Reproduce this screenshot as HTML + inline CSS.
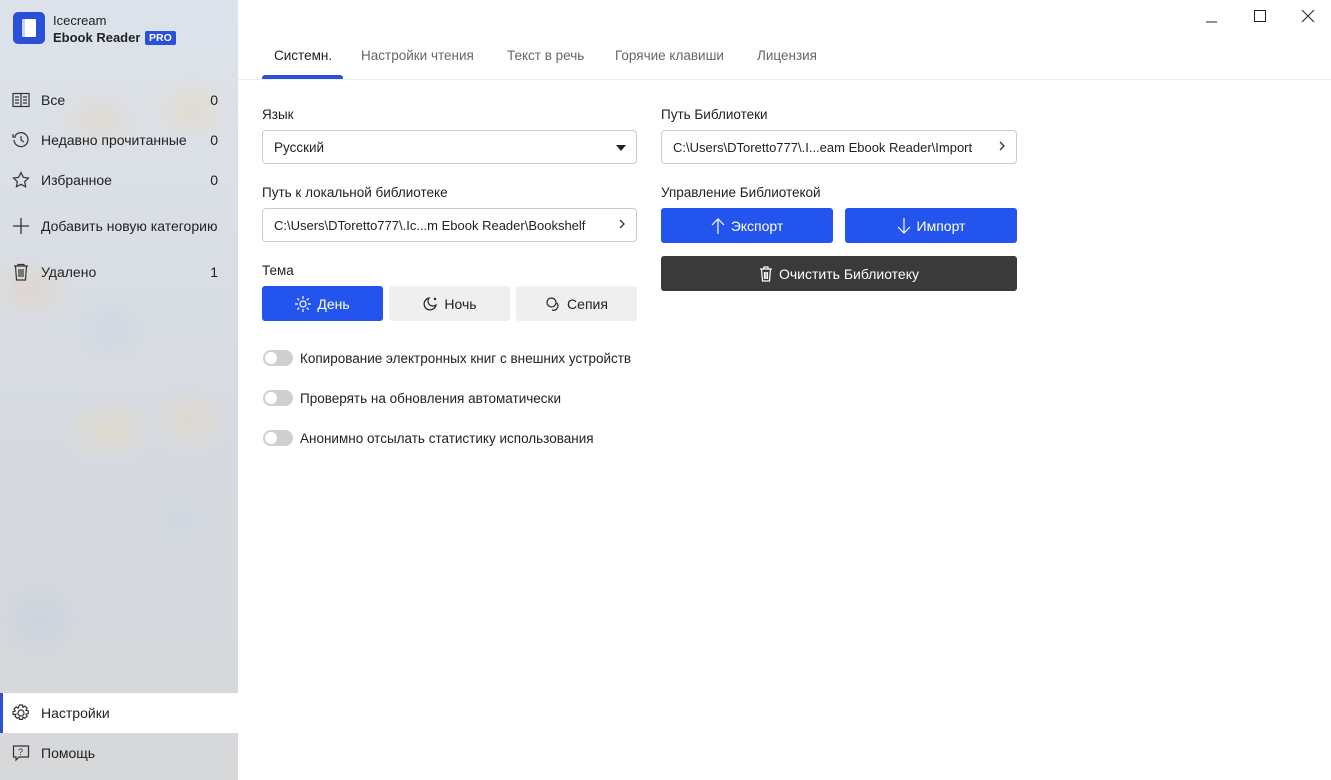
<!DOCTYPE html>
<html><head><meta charset="utf-8"><style>
*{box-sizing:border-box;margin:0;padding:0}
body{width:1331px;height:780px;overflow:hidden;background:#fff;font-family:"Liberation Sans","DejaVu Sans",sans-serif;font-size:13.5px;color:#222;position:relative}
.side{position:absolute;left:0;top:0;width:238px;height:780px;background:
radial-gradient(ellipse 45px 35px at 100px 120px,#e0dad2,transparent),
radial-gradient(ellipse 45px 35px at 190px 110px,#e2dbd0,transparent),
radial-gradient(ellipse 40px 35px at 110px 330px,#d0d8e2,transparent),
radial-gradient(ellipse 45px 35px at 30px 290px,#dfd6d0,transparent),
radial-gradient(ellipse 45px 35px at 110px 430px,#dfdacd,transparent),
radial-gradient(ellipse 40px 35px at 190px 420px,#dfd8d0,transparent),
radial-gradient(ellipse 45px 45px at 40px 620px,#ccd4de,transparent),
radial-gradient(ellipse 45px 45px at 180px 520px,#d2d8e0,transparent),
linear-gradient(#dde3ea,#d6dae0 60%,#d6d8da);}
.logo{position:absolute;left:13px;top:12px;width:32px;height:32px;border-radius:5px;background:#2950d6}
.logo i{position:absolute;left:9px;top:7px;width:14px;height:18px;background:#fff;border-radius:1px;border-left:3px solid #c9d4f5}
.t1{position:absolute;left:53px;top:13px;font-size:13px}
.t2{position:absolute;left:53px;top:30px;font-size:13px;font-weight:bold}
.pro{position:absolute;left:145px;top:31px;background:#2950d6;color:#fff;font-size:10.5px;font-weight:bold;padding:1px 4px;border-radius:2px}
.it{position:absolute;left:0;width:238px;height:40px;display:flex;align-items:center;font-size:14px}
.it svg{position:absolute;left:12px}
.it span.l{position:absolute;left:41px}
.it span.c{position:absolute;right:20px}
.sel{background:#fff;border-left:3px solid #2950d6}
.tabs{position:absolute;left:238px;top:0;right:0;height:80px;border-bottom:1px solid #eee}
.tab{position:absolute;top:48px;font-size:13.5px;color:#666}
.ul{position:absolute;left:262px;top:75px;width:81px;height:4px;background:#2950d6;border-radius:3px 3px 0 0}
.lab{position:absolute;font-size:13.5px;color:#222}
.box{position:absolute;height:34px;border:1px solid #ccc;border-radius:4px;display:flex;align-items:center;padding-left:11px;font-size:13.5px;color:#222}
.box .ar{position:absolute;right:10px;top:8px}
.btn{position:absolute;height:35px;border-radius:3px;display:flex;align-items:center;justify-content:center;font-size:14px;gap:6px}
.blue{background:#2454ee;color:#fff}
.grey{background:#efefef;color:#222}
.dark{background:#3a3a3a;color:#fff}
.tg{position:absolute;left:263px;width:30px;height:16px;border-radius:8px;background:#cfcfcf}
.tg::after{content:"";position:absolute;left:2px;top:2px;width:12px;height:12px;border-radius:50%;background:#fff}
.tl{position:absolute;left:300px;font-size:13.5px}
</style></head><body>
<div class="side">
<div class="logo"><i></i></div>
<div class="t1">Icecream</div><div class="t2">Ebook Reader</div><div class="pro">PRO</div>
<div class="it" style="top:80px"><svg width="18" height="16" viewBox="0 0 18 16" fill="none" stroke="#333" stroke-width="1.2"><rect x="1" y="1.5" width="16" height="13"/><line x1="9" y1="1.5" x2="9" y2="14.5"/><path d="M3 5h4M3 8h4M3 11h4M11 5h4M11 8h4M11 11h4"/></svg><span class="l">Все</span><span class="c">0</span></div>
<div class="it" style="top:120px"><svg width="18" height="18" viewBox="0 0 18 18" fill="none" stroke="#333" stroke-width="1.2"><path d="M3 5A7 7 0 1 1 2 9"/><path d="M1 3v3h3"/><path d="M9 5v4l3 2"/></svg><span class="l">Недавно прочитанные</span><span class="c">0</span></div>
<div class="it" style="top:160px"><svg width="18" height="18" viewBox="0 0 18 18" fill="none" stroke="#333" stroke-width="1.2"><path d="M9 1.5l2.3 4.8 5.2.7-3.8 3.6.9 5.2L9 13.3l-4.6 2.5.9-5.2L1.5 7l5.2-.7z"/></svg><span class="l">Избранное</span><span class="c">0</span></div>
<div class="it" style="top:206px"><svg width="18" height="18" viewBox="0 0 18 18" stroke="#333" stroke-width="1.3"><path d="M9 1v16M1 9h16"/></svg><span class="l">Добавить новую категорию</span></div>
<div class="it" style="top:252px"><svg width="18" height="18" viewBox="0 0 18 18" fill="none" stroke="#333" stroke-width="1.2"><path d="M2 3h14M6 3V1.5h6V3M3.5 3l1 14h9l1-14M7 6v8M9 6v8M11 6v8"/></svg><span class="l">Удалено</span><span class="c">1</span></div>
<div class="it sel" style="top:693px"><svg width="18" height="18" viewBox="0 0 18 18" fill="none" stroke="#333" stroke-width="1.2" style="left:9px"><circle cx="9" cy="9" r="3"/><path d="M7.5 1h3l.5 2.3 2-1.2 2.1 2.1-1.2 2 2.3.5v3l-2.3.5 1.2 2-2.1 2.1-2-1.2-.5 2.3h-3l-.5-2.3-2 1.2-2.1-2.1 1.2-2L1 10.5v-3l2.3-.5-1.2-2 2.1-2.1 2 1.2z"/></svg><span class="l" style="left:38px">Настройки</span></div>
<div class="it" style="top:733px"><svg width="18" height="18" viewBox="0 0 18 18" fill="none" stroke="#333" stroke-width="1.2"><path d="M1.5 2h15v11H7l-3 3v-3H1.5z"/><text x="6" y="11" font-size="9" fill="#333" stroke="none" font-family="Liberation Sans">?</text></svg><span class="l">Помощь</span></div>
</div>
<svg style="position:absolute;left:1206px;top:10px" width="110" height="14" fill="none" stroke="#222" stroke-width="1"><path d="M0 12h11"/><rect x="48.5" y="0.5" width="11" height="11"/><path d="M96 0l12 12M108 0L96 12"/></svg>
<div class="tabs"></div>
<div class="tab" style="left:274px;color:#222">Системн.</div>
<div class="tab" style="left:361px">Настройки чтения</div>
<div class="tab" style="left:507px">Текст в речь</div>
<div class="tab" style="left:615px">Горячие клавиши</div>
<div class="tab" style="left:757px">Лицензия</div>
<div class="ul"></div>

<div class="lab" style="left:262px;top:107px">Язык</div>
<div class="box" style="left:262px;top:130px;width:375px">Русский<svg class="ar" style="top:14px;right:10px" width="10" height="6"><path d="M0 0h10L5 6z" fill="#222"/></svg></div>
<div class="lab" style="left:262px;top:185px">Путь к локальной библиотеке</div>
<div class="box" style="left:262px;top:208px;width:375px;font-size:13px">C:\Users\DToretto777\.Ic...m Ebook Reader\Bookshelf<svg class="ar" width="8" height="14" fill="none" stroke="#333" stroke-width="1.3"><path d="M2 3l4 4-4 4"/></svg></div>
<div class="lab" style="left:262px;top:263px">Тема</div>
<div class="btn blue" style="left:262px;top:286px;width:121px"><svg width="16" height="16" fill="none" stroke="#fff" stroke-width="1.2"><circle cx="8" cy="8" r="3"/><path d="M8 0v3M8 13v3M0 8h3M13 8h3M2.3 2.3l2 2M11.7 11.7l2 2M2.3 13.7l2-2M11.7 4.3l2-2"/></svg>День</div>
<div class="btn grey" style="left:389px;top:286px;width:121px"><svg width="16" height="16" fill="none" stroke="#222" stroke-width="1.2"><path d="M7 2a6 6 0 1 0 7 7A5 5 0 0 1 7 2z"/><circle cx="13" cy="3" r=".6"/></svg>Ночь</div>
<div class="btn grey" style="left:516px;top:286px;width:121px"><svg width="16" height="16" fill="none" stroke="#222" stroke-width="1.2"><circle cx="6.5" cy="6.5" r="4.5"/><path d="M12 7a4.5 4.5 0 0 1-5 7"/></svg>Сепия</div>

<div class="tg" style="top:350px"></div><div class="tl" style="top:351px">Копирование электронных книг с внешних устройств</div>
<div class="tg" style="top:390px"></div><div class="tl" style="top:391px">Проверять на обновления автоматически</div>
<div class="tg" style="top:430px"></div><div class="tl" style="top:431px">Анонимно отсылать статистику использования</div>

<div class="lab" style="left:661px;top:107px">Путь Библиотеки</div>
<div class="box" style="left:661px;top:130px;width:356px;font-size:13px">C:\Users\DToretto777\.I...eam Ebook Reader\Import<svg class="ar" width="8" height="14" fill="none" stroke="#333" stroke-width="1.3"><path d="M2 3l4 4-4 4"/></svg></div>
<div class="lab" style="left:661px;top:185px">Управление Библиотекой</div>
<div class="btn blue" style="left:661px;top:208px;width:172px"><svg width="14" height="16" fill="none" stroke="#fff" stroke-width="1.2"><path d="M7 16V1M1 7l6-6 6 6"/></svg>Экспорт</div>
<div class="btn blue" style="left:845px;top:208px;width:172px"><svg width="14" height="16" fill="none" stroke="#fff" stroke-width="1.2"><path d="M7 0v15M1 9l6 6 6-6"/></svg>Импорт</div>
<div class="btn dark" style="left:661px;top:256px;width:356px"><svg width="14" height="16" fill="none" stroke="#fff" stroke-width="1.2"><path d="M1 3h12M5 3V1h4v2M2.5 3l1 12h7l1-12M5.5 6v7M7 6v7M8.5 6v7"/></svg>Очистить Библиотеку</div>
</body></html>
